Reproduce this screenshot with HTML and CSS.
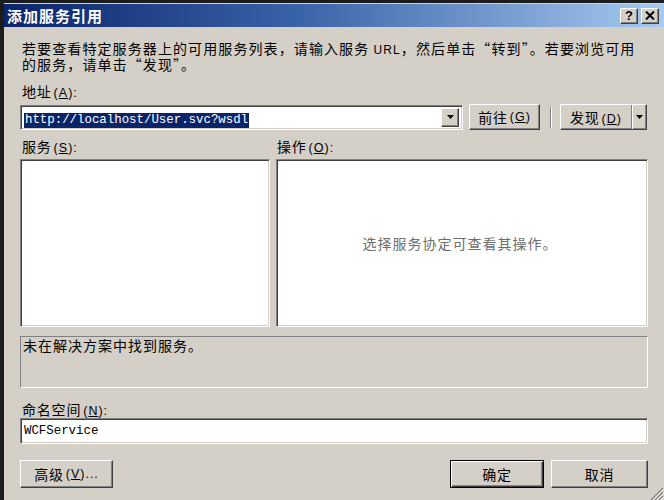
FILE: index.html
```html
<!DOCTYPE html>
<html lang="zh-CN">
<head>
<meta charset="utf-8">
<title>添加服务引用</title>
<link rel="stylesheet" href="styles.css">
</head>
<body>
<div class="dialog">
  <div class="titlebar">
    <span class="title">添加服务引用</span>
    <div class="tbtns">
      <span class="tbtn help">?</span>
      <span class="tbtn close"><svg width="10" height="9" viewBox="0 0 10 9"><path d="M1 0.5 L9 8.5 M9 0.5 L1 8.5" stroke="#000" stroke-width="2"/></svg></span>
    </div>
  </div>
  <div class="content">
    <p class="desc">若要查看特定服务器上的可用服务列表，请输入服务 <span class="lat">URL</span>，然后单击“转到”。若要浏览可用<br>的服务，请单击“发现”。</p>
    <div class="label addr-label">地址<span class="acc">(<u>A</u>):</span></div>
    <div class="addr-row">
      <div class="combo sunken">
        <span class="combo-text"><span class="sel">http://localhost/User.svc?wsdl</span></span>
        <span class="drop btn"><svg width="7" height="4" viewBox="0 0 7 4"><path d="M0 0 H7 L3.5 4 Z" fill="#000"/></svg></span>
      </div>
      <div class="btn goto">前往<span class="acc">(<u>G</u>)</span></div>
      <div class="sep"></div>
      <div class="btn discover">
        <span class="disc-main">发现<span class="acc">(<u>D</u>)</span></span>
        <span class="disc-arrow"><svg width="7" height="4" viewBox="0 0 7 4"><path d="M0 0 H7 L3.5 4 Z" fill="#000"/></svg></span>
      </div>
    </div>
    <div class="pair labels">
      <div class="label col-a">服务<span class="acc">(<u>S</u>):</span></div>
      <div class="label col-b">操作<span class="acc">(<u>O</u>):</span></div>
    </div>
    <div class="pair lists">
      <div class="list sunken col-a"></div>
      <div class="list sunken ops col-b"><span class="hint">选择服务协定可查看其操作。</span></div>
    </div>
    <div class="status"><span class="status-text">未在解决方案中找到服务。</span></div>
    <div class="label ns-label">命名空间<span class="acc">(<u>N</u>):</span></div>
    <div class="ns sunken"><span class="lat mono">WCFService</span></div>
    <div class="bottom">
      <div class="btn adv">高级<span class="acc">(<u>V</u>)...</span></div>
      <div class="spacer"></div>
      <div class="btn ok default">确定</div>
      <div class="btn cancel">取消</div>
    </div>
  </div>
  <svg class="grip" width="14" height="12" viewBox="0 0 14 12">
    <path d="M13 0 L1 12 M13 4 L5 12 M13 8 L9 12" stroke="#808080" stroke-width="1.2"/>
    <path d="M14 1 L3 12 M14 5 L7 12 M14 9 L11 12" stroke="#fff" stroke-width="1"/>
  </svg>
</div>
</body>
</html>
```
FILE: styles.css
```css
* { box-sizing: border-box; }
html, body { margin: 0; padding: 0; }
body {
  background: #1c1c1c;
  width: 664px;
  height: 500px;
  overflow: hidden;
  font-family: "Noto Sans CJK SC", sans-serif;
  font-size: 14px;
  color: #000;
}
.dialog {
  position: relative;
  margin: 3px 0 0 4px;
  width: 660px;
  height: 497px;
  background: #d4d0c8;
  padding-top: 1px;
}
.titlebar {
  height: 23px;
  display: flex;
  align-items: center;
  justify-content: space-between;
  padding: 0 5px 0 3px;
  background: linear-gradient(to right, #0a246a 0%, #3a64a8 45%, #a6caf0 100%);
}
.title {
  color: #fff;
  font-weight: bold;
  font-size: 15px;
  letter-spacing: 1px;
  line-height: 23px;
}
.tbtns { display: flex; gap: 3px; }
.tbtn {
  width: 18px;
  height: 16px;
  display: flex;
  align-items: center;
  justify-content: center;
  background: #d4d0c8;
  border: 1px solid;
  border-color: #fff #404040 #404040 #fff;
  box-shadow: inset -1px -1px #808080;
  font-family: "Liberation Sans", sans-serif;
  font-weight: bold;
  font-size: 13px;
  line-height: 1;
}
.content {
  padding: 0 16px;
  width: 660px;
  display: flex;
  flex-direction: column;
  align-items: flex-start;
}
.desc {
  margin: 14px 0 0 2px;
  line-height: 14px;
  white-space: nowrap;
  letter-spacing: 1.1px;
}
.lat { font-family: "Liberation Sans", sans-serif; font-size: 12px; }
.label { line-height: 13px; height: 13px; padding-left: 2px; white-space: nowrap; letter-spacing: 0.8px; }
.acc { font-family: "Liberation Sans", sans-serif; font-size: 12.5px; margin-left: 2px; letter-spacing: 1px; }
.addr-label { margin-top: 14px; }
.addr-row {
  margin-top: 6px;
  height: 26px;
  width: 628px;
  display: flex;
  align-items: center;
}
.sunken {
  background: #fff;
  border: 1px solid;
  border-color: #808080 #fff #fff #808080;
  box-shadow: inset 1px 1px #404040, inset -1px -1px #d4d0c8;
}
.combo {
  width: 443px;
  height: 25px;
  display: flex;
  align-items: center;
  padding: 2px;
}
.combo-text { flex: 1; padding-left: 1px; }
.sel {
  background: #0a246a;
  color: #fff;
  font-family: "Liberation Mono", monospace;
  font-size: 12.4px;
  line-height: 15px;
  display: inline-block;
  padding: 0 1px;
  letter-spacing: 0;
}
.btn {
  display: flex;
  align-items: center;
  justify-content: center;
  background: #d4d0c8;
  border: 1px solid;
  border-color: #fff #404040 #404040 #fff;
  box-shadow: inset -1px -1px #808080;
  white-space: nowrap;
  letter-spacing: 0.8px;
}
.drop { width: 18px; height: 19px; margin-right: 1px; }
.goto { width: 71px; height: 26px; margin-left: 6px; }
.sep {
  width: 2px;
  height: 21px;
  margin: 0 8px 0 10px;
  border-left: 1px solid #808080;
  border-right: 1px solid #fff;
}
.discover { width: 87px; height: 26px; justify-content: flex-start; }
.disc-main { width: 70px; text-align: center; }
.disc-arrow {
  flex: 1;
  height: 100%;
  display: flex;
  align-items: center;
  justify-content: center;
  border-left: 1px solid #808080;
  box-shadow: inset 1px 0 #fff;
}
.pair {
  display: flex;
  width: 628px;
  gap: 6px;
}
.col-a { width: 250px; flex: none; }
.col-b { width: 372px; flex: none; }
.labels { margin-top: 10px; }
.labels .col-b { padding-left: 1px; }
.lists { margin-top: 6px; height: 168px; }
.lists .list { height: 168px; }
.ops {
  display: flex;
  align-items: center;
  justify-content: center;
}
.hint { color: #6e6e6e; letter-spacing: 1px; margin-right: 4px; }
.status {
  margin-top: 9px;
  width: 628px;
  height: 52px;
  display: flex;
  align-items: flex-start;
  border: 1px solid;
  border-color: #808080 #fff #fff #808080;
  padding: 2px;
}
.status-text { line-height: 13px; letter-spacing: 1px; }
.ns-label { margin-top: 15px; }
.ns {
  margin-top: 2px;
  width: 628px;
  height: 26px;
  display: flex;
  align-items: center;
  padding-left: 3px;
}
.mono { font-family: "Liberation Mono", monospace; font-size: 12.4px; }
.bottom {
  margin-top: 16px;
  width: 628px;
  height: 28px;
  display: flex;
}
.spacer { flex: 1; }
.adv { width: 93px; height: 28px; }
.ok { width: 94px; height: 28px; }
.cancel { width: 97px; height: 28px; margin-left: 7px; }
.default {
  border: 1px solid #000;
  box-shadow: inset 1px 1px #fff, inset -1px -1px #404040, inset -2px -2px #808080;
}
.grip { position: absolute; right: 0; bottom: 0; }
```
